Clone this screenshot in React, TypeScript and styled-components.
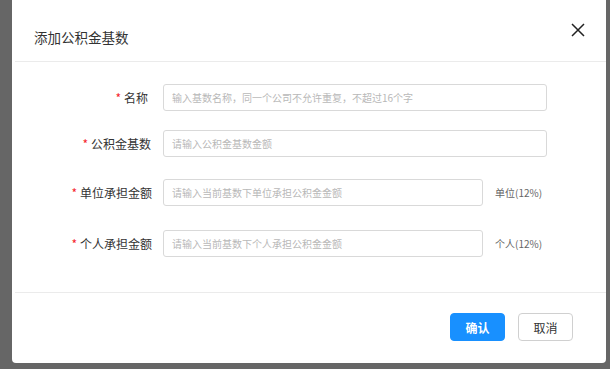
import React from "react";
import styled, { createGlobalStyle } from "styled-components";

const GlobalStyle = createGlobalStyle`
  html, body {
    margin: 0;
    padding: 0;
    background: #666666;
    font-family: "Noto Sans CJK SC", "Noto Sans", sans-serif;
  }
`;

const Page = styled.div`
  width: 610px;
  height: 369px;
  overflow: hidden;
  padding-left: 12px;
  box-sizing: border-box;
`;

const Modal = styled.div`
  width: 594px;
  height: 363px;
  background: #fff;
  border-radius: 0 0 4px 4px;
  display: flex;
  flex-direction: column;
`;

const Header = styled.div`
  height: 61px;
  display: flex;
  align-items: flex-start;
  justify-content: space-between;
  padding: 0 20px 0 22px;
  box-sizing: border-box;
`;

const Title = styled.div`
  margin-top: 27px;
  font-size: 13.5px;
  line-height: 20px;
  color: #333;
`;

const Close = styled.button`
  margin-top: 22px;
  width: 16px;
  height: 16px;
  padding: 0;
  border: none;
  background: none;
  display: flex;
  align-items: center;
  justify-content: center;
  cursor: pointer;
`;

const Divider = styled.div`
  height: 1px;
  margin-left: 3px;
  background: #ebebeb;
`;

const Body = styled.div`
  flex: 1;
  padding: 22px 0 0 0;
  display: flex;
  flex-direction: column;
`;

const Row = styled.div<{ $top: number }>`
  display: flex;
  align-items: center;
  height: 27px;
  margin-top: ${(p) => p.$top}px;
`;

const Label = styled.label<{ $shift?: number }>`
  width: 140px;
  padding-right: ${(p) => p.$shift ?? 0}px;
  box-sizing: border-box;
  text-align: right;
  font-size: 12px;
  color: #333;
  white-space: nowrap;
`;

const Star = styled.span`
  color: #f5222d;
  margin-right: 3px;
`;

const Input = styled.input<{ $width: number }>`
  margin-left: 11px;
  width: ${(p) => p.$width}px;
  height: 27px;
  box-sizing: border-box;
  border: 1px solid #d9d9d9;
  border-radius: 3px;
  padding: 0 8px;
  font-family: inherit;
  font-size: 10px;
  color: #333;
  outline: none;
  &::placeholder {
    color: #b8b8b8;
  }
`;

const Suffix = styled.span`
  margin-left: 12px;
  font-size: 10px;
  color: #666;
`;

const Footer = styled.div`
  height: 70px;
  display: flex;
  align-items: flex-start;
  justify-content: flex-end;
  gap: 13px;
  padding: 20px 33px 0 0;
  box-sizing: border-box;
`;

const Button = styled.button<{ $primary?: boolean }>`
  width: 55px;
  height: 28px;
  border-radius: 4px;
  font-family: inherit;
  font-size: 12px;
  font-weight: ${(p) => (p.$primary ? 700 : 400)};
  color: ${(p) => (p.$primary ? "#fff" : "#333")};
  background: ${(p) => (p.$primary ? "#1890ff" : "#fff")};
  border: 1px solid ${(p) => (p.$primary ? "#1890ff" : "#d0d0d0")};
  padding: 0;
  cursor: pointer;
`;

const fields = [
  { label: "名称", placeholder: "输入基数名称，同一个公司不允许重复，不超过16个字", top: 0, width: 384, shift: 4 },
  { label: "公积金基数", placeholder: "请输入公积金基数金额", top: 19, width: 384, shift: 1 },
  { label: "单位承担金额", placeholder: "请输入当前基数下单位承担公积金金额", top: 22, width: 320, suffix: "单位(12%)", shift: 0 },
  { label: "个人承担金额", placeholder: "请输入当前基数下个人承担公积金金额", top: 24, width: 320, suffix: "个人(12%)", shift: 0 },
];

export default function App() {
  return (
    <>
      <GlobalStyle />
      <Page>
        <Modal>
          <Header>
            <Title>添加公积金基数</Title>
            <Close aria-label="关闭">
              <svg width="14" height="14" viewBox="0 0 14 14">
                <path d="M1 1L13 13M13 1L1 13" stroke="#222" strokeWidth="1.5" />
              </svg>
            </Close>
          </Header>
          <Divider />
          <Body>
            {fields.map((f) => (
              <Row key={f.label} $top={f.top}>
                <Label $shift={f.shift}>
                  <Star>*</Star>
                  {f.label}
                </Label>
                <Input $width={f.width} placeholder={f.placeholder} />
                {f.suffix && <Suffix>{f.suffix}</Suffix>}
              </Row>
            ))}
          </Body>
          <Divider />
          <Footer>
            <Button $primary>确认</Button>
            <Button>取消</Button>
          </Footer>
        </Modal>
      </Page>
    </>
  );
}
